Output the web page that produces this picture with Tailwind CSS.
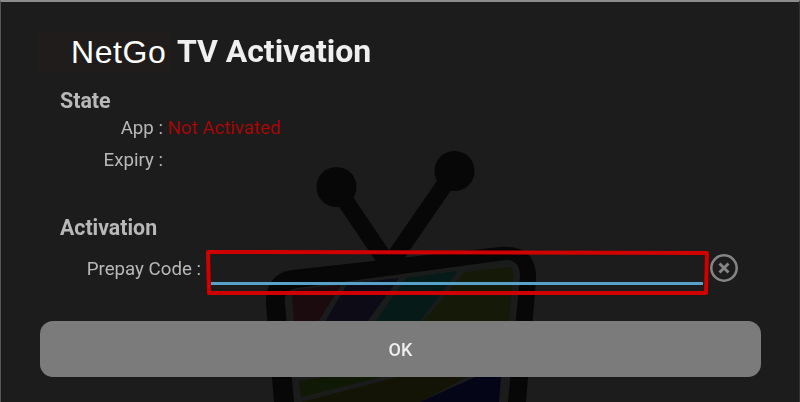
<!DOCTYPE html>
<html lang="en">
<head>
<meta charset="utf-8">
<title>NetGo TV Activation</title>
<script src="https://cdn.jsdelivr.net/npm/@tailwindcss/browser@4"></script>
</head>
<body class="bg-[#1c1c1c]">
<main class="relative isolate flex h-[402px] w-[800px] flex-col overflow-hidden border-l border-r border-t-2 border-l-[#555] border-r-[#303030] border-t-[#8b8d8d] bg-[#1c1c1c] font-['Roboto',sans-serif] text-[#b8b8b8]">
  <!-- TV illustration behind the form -->
  <svg class="absolute -left-px -top-0.5 -z-10 blur-[0.6px]" width="800" height="402" viewBox="0 0 800 402" aria-hidden="true">
    <g stroke="#070707" stroke-width="17"><path d="M336 187L388 264M454 171L390 264"/></g>
    <circle cx="336.500" cy="187" r="20" fill="#070707"/><circle cx="454.500" cy="171" r="20" fill="#070707"/>
    <path d="M274 402L266 304Q265 274 292 270L500 247Q537 244 536 280L526 402Z" fill="#070707"/>
    <path d="M294 402L285 304Q283 290 298 288L506 260Q520 260 520 276L508 402Z" fill="#1a1b1b"/>
    <path d="M292 294Q293 290 300 289L341 285L318 322H294Z" fill="#1b0b0f"/>
    <path d="M347 284L399 278L367 322H325Z" fill="#0d0b15"/>
    <path d="M406 278L458 271L420 322H375Z" fill="#061b17"/>
    <path d="M465 272L510 267Q514 270 513 278L509 322H422Z" fill="#141a07"/>
    <path d="M299 381L325 377H382L301 397Z" fill="#101905"/>
    <path d="M302 402L397 377H467L420 402Z" fill="#141406"/>
    <path d="M420 402L475 377H501L499 402Z" fill="#040517"/>
  </svg>

  <h1 class="flex h-[70px] shrink-0 items-start pl-[37px] pt-[30px] whitespace-nowrap">
    <span class="h-[39px] w-[132px] bg-[#201c1b] pl-[33px] font-['Liberation_Sans',sans-serif] text-[32px] leading-[41px] font-normal tracking-[0.6px] text-white">NetGo</span>
    <span class="pl-[7px] text-[32px] leading-[39px] font-bold tracking-[-0.05px] text-[#efefef] blur-[0.5px]">TV Activation</span>
  </h1>

  <section class="flex h-[134px] shrink-0 flex-col pl-[59px] pt-4 blur-[0.4px]">
    <h2 class="h-[25px] text-[21.4px] leading-[26px] font-bold">State</h2>
    <div class="flex h-[30px] items-center gap-[5px] text-[18.7px] leading-[30px]">
      <span class="w-[103px] text-right whitespace-nowrap">App :</span><span class="text-[#ad0606]">Not Activated</span>
    </div>
    <div class="flex h-[33px] items-center pt-[2px] text-[18.7px]">
      <span class="w-[103px] text-right whitespace-nowrap">Expiry :</span>
    </div>
  </section>

  <section class="flex h-[113px] shrink-0 flex-col pl-[59px] pt-[9px]">
    <h2 class="h-[25px] text-[21.3px] leading-[25px] font-bold blur-[0.4px]">Activation</h2>
    <div class="flex h-[56px] items-center">
      <label for="code" class="w-[142px] pt-[2px] pr-px text-right text-[18.7px] whitespace-nowrap blur-[0.4px]">Prepay Code :</label>
      <div class="relative ml-[9px] h-[34px] w-[492px]">
        <input id="code" class="absolute inset-x-0 top-0.5 h-8 border-b-3 border-[#58a2ca] bg-transparent outline-none">
        <svg class="absolute -left-[6px] -top-[2px]" width="506" height="50" viewBox="0 0 506 50" fill="none" stroke="#d10000" stroke-width="4" stroke-linejoin="round" aria-hidden="true"><path d="M3 3L502 4L501 44H4Z"/></svg>
      </div>
      <svg class="ml-[7px]" width="28" height="28" viewBox="0 0 28 28" fill="none" stroke="#858585" aria-label="Clear"><circle cx="14" cy="14" r="12.700" stroke-width="2.500"/><path d="M9.500 9.500L18.500 18.500M18.500 9.500L9.500 18.500" stroke-width="3"/></svg>
    </div>
  </section>

  <button class="ml-[39px] mt-[2px] h-[56px] w-[721px] shrink-0 rounded-[13px] bg-[#7b7b7b] text-[18px] font-medium text-[#eeeeee]"><span class="blur-[0.3px]">OK</span></button>
</main>
</body>
</html>
